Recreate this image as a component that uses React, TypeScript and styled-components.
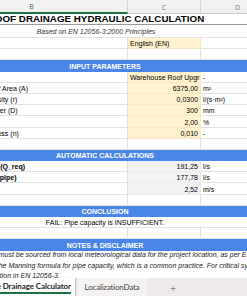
import React from 'react';
import styled, { createGlobalStyle } from 'styled-components';

const GlobalStyle = createGlobalStyle`
  html, body {
    margin: 0;
    padding: 0;
    background: #fff;
  }
  body {
    font-family: 'Liberation Sans', Arial, sans-serif;
    overflow: hidden;
  }
`;

// columns A..D, the sheet is scrolled so A and part of B are off screen
const COLS = '19px 192px 73px 74px';
const GRID = '#e1e1e1';
const ROW = 11.2;

type Tone = 'plain' | 'input' | 'calc' | 'band';

const tones: Record<Tone, { bg: string; line: string; color: string }> = {
  plain: { bg: '#ffffff', line: GRID, color: '#000' },
  input: { bg: '#fff2cc', line: '#f6e8c0', color: '#000' },
  calc: { bg: '#f2f2f2', line: '#e9e9e9', color: '#000' },
  band: { bg: '#4a86e8', line: '#4a86e8', color: '#fff' },
};

const Window = styled.div`
  width: 247px;
  height: 296px;
  display: flex;
  flex-direction: column;
  overflow: hidden;
  background: #fff;
`;

const Viewport = styled.div`
  flex: 1;
  min-height: 0;
  overflow: hidden;
`;

const Sheet = styled.div`
  width: 358px;
  margin-left: -83px;
`;

const Row = styled.div<{ $h?: number }>`
  display: grid;
  grid-template-columns: ${COLS};
  height: ${({ $h }) => $h ?? ROW}px;
`;

const ColHeader = styled.div<{ $selected?: boolean }>`
  display: flex;
  align-items: flex-end;
  justify-content: center;
  box-sizing: border-box;
  padding-bottom: 1px;
  background: #f1f1f1;
  border-right: 1px solid #d6d6d6;
  border-bottom: ${({ $selected }) => ($selected ? '2px solid #1e7145' : '1px solid #cdcdcd')};
  color: ${({ $selected }) => ($selected ? '#1e7145' : '#5d8470')};
  font-family: 'Open Sans', sans-serif;
  font-size: 7px;
  line-height: 9px;
`;

const Cell = styled.div<{
  $span?: number;
  $tone?: Tone;
  $align?: 'left' | 'right' | 'center';
  $bold?: boolean;
  $indent?: number;
}>`
  grid-column: span ${({ $span }) => $span ?? 1};
  display: flex;
  align-items: flex-end;
  justify-content: ${({ $align }) =>
    $align === 'right' ? 'flex-end' : $align === 'center' ? 'center' : 'flex-start'};
  box-sizing: border-box;
  min-width: 0;
  overflow: hidden;
  white-space: nowrap;
  padding: 0 2px 0 ${({ $indent }) => 2 + ($indent ?? 0)}px;
  font-size: 7px;
  line-height: 8px;
  font-weight: ${({ $bold }) => ($bold ? 700 : 400)};
  background: ${({ $tone }) => tones[$tone ?? 'plain'].bg};
  color: ${({ $tone }) => tones[$tone ?? 'plain'].color};
  border-right: 1px solid ${({ $tone }) => tones[$tone ?? 'plain'].line};
  border-bottom: 1px solid ${({ $tone }) => tones[$tone ?? 'plain'].line};
`;

const Title = styled.div`
  grid-column: span 4;
  display: flex;
  align-items: flex-end;
  justify-content: center;
  white-space: nowrap;
  border-bottom: 1px solid #9a9a9a;
  font-size: 9.8px;
  line-height: 10px;
  font-weight: 700;
  color: #000;
`;

const Subtitle = styled.div`
  grid-column: span 4;
  display: flex;
  align-items: flex-end;
  justify-content: center;
  padding-bottom: 1px;
  white-space: nowrap;
  border-bottom: 1px solid ${GRID};
  font-size: 7px;
  line-height: 8px;
  font-style: italic;
  color: #333;
`;

const Note = styled.div`
  grid-column: span 3;
  margin-top: -1px;
  padding: 0 2px;
  white-space: nowrap;
  font-size: 7px;
  line-height: 10px;
  font-style: italic;
  color: #222;
`;

const TabBar = styled.div`
  height: 18px;
  flex-shrink: 0;
  display: flex;
  align-items: stretch;
  background: #eeeaea;
  font-family: Lato, 'Open Sans', sans-serif;
  font-size: 8px;
  letter-spacing: -0.2px;
  color: #444;
`;

const ActiveTab = styled.div`
  width: 75px;
  flex-shrink: 0;
  box-sizing: border-box;
  display: flex;
  align-items: center;
  justify-content: flex-end;
  padding-right: 4px;
  overflow: hidden;
  background: #fff;
  box-shadow: 1px 0 1px rgba(0, 0, 0, 0.15);
  font-weight: 700;
  letter-spacing: -0.1px;
  color: #1f1f1f;
`;

const TabLabel = styled.span`
  white-space: nowrap;
  line-height: 10px;
  padding-bottom: 1px;
  border-bottom: 2px solid #1e7145;
`;

const Tab = styled.div`
  width: 70px;
  margin-left: 2px;
  display: flex;
  align-items: center;
  justify-content: center;
  white-space: nowrap;
  background: #f5f2f2;
`;

const AddSheet = styled.div`
  width: 52px;
  display: flex;
  align-items: center;
  justify-content: center;
  font-family: 'Open Sans', sans-serif;
  font-size: 11px;
  font-weight: 300;
  color: #555;
`;

type Line = { label: string; value: string; unit: string; left?: boolean };

const inputs: Line[] = [
  { label: 'Project Name', value: 'Warehouse Roof Upgrade', unit: '-', left: true },
  { label: 'Effective Roof Area (A)', value: '6375,00', unit: 'm²' },
  { label: 'Rainfall Intensity (r)', value: '0,0300', unit: 'l/(s·m²)' },
  { label: 'Outlet Diameter (D)', value: '300', unit: 'mm' },
  { label: 'Slope (S)', value: '2,00', unit: '%' },
  { label: 'Pipe Roughness (n)', value: '0,010', unit: '-' },
];

const results: Line[] = [
  { label: 'Design Flow (Q_req)', value: '191,25', unit: 'l/s' },
  { label: 'Capacity (Q_pipe)', value: '177,78', unit: 'l/s' },
  { label: 'Velocity (v)', value: '2,52', unit: 'm/s' },
];

const Band = ({ children }: { children: React.ReactNode }) => (
  <Row>
    <Cell $tone="band" />
    <Cell $tone="band" $span={3} $align="center" $bold>
      {children}
    </Cell>
  </Row>
);

const Blank = () => (
  <Row>
    <Cell />
    <Cell />
    <Cell />
    <Cell />
  </Row>
);

export default function App() {
  return (
    <>
      <GlobalStyle />
      <Window>
        <Viewport>
          <Sheet>
            <Row $h={14}>
              <ColHeader>A</ColHeader>
              <ColHeader $selected>B</ColHeader>
              <ColHeader>C</ColHeader>
              <ColHeader>D</ColHeader>
            </Row>
            <Row $h={11}>
              <Title>ROOF DRAINAGE HYDRAULIC CALCULATION</Title>
            </Row>
            <Row $h={13}>
              <Subtitle>Based on EN 12056-3:2000 Principles</Subtitle>
            </Row>
            <Row>
              <Cell />
              <Cell $indent={19}>Language</Cell>
              <Cell $tone="input">English (EN)</Cell>
              <Cell />
            </Row>
            <Blank />

            <Band>INPUT PARAMETERS</Band>
            {inputs.map((r) => (
              <Row key={r.label}>
                <Cell />
                <Cell $indent={19}>{r.label}</Cell>
                <Cell $tone="input" $align={r.left ? 'left' : 'right'}>
                  {r.value}
                </Cell>
                <Cell>{r.unit}</Cell>
              </Row>
            ))}
            <Blank />

            <Band>AUTOMATIC CALCULATIONS</Band>
            {results.map((r) => (
              <Row key={r.label}>
                <Cell />
                <Cell $indent={19} $bold>
                  {r.label}
                </Cell>
                <Cell $tone="calc" $align="right">
                  {r.value}
                </Cell>
                <Cell>{r.unit}</Cell>
              </Row>
            ))}
            <Blank />

            <Band>CONCLUSION</Band>
            <Row>
              <Cell />
              <Cell $span={3} $align="center">
                FAIL: Pipe capacity is INSUFFICIENT.
              </Cell>
            </Row>
            <Blank />

            <Band>NOTES &amp; DISCLAIMER</Band>
            <Row>
              <Cell />
              <Note>
                1. Rainfall intensity must be sourced from local meteorological data for the project location, as per
                EN 12056-3.
              </Note>
            </Row>
            <Row $h={30}>
              <Cell />
              <Note>
                2. This sheet uses the Manning formula for pipe capacity, which is a common practice. For critical systems,
                <br />
                consider the calculation in EN 12056-3.
              </Note>
            </Row>
          </Sheet>
        </Viewport>
        <TabBar>
          <ActiveTab>
            <TabLabel>Surface Drainage Calculator</TabLabel>
          </ActiveTab>
          <Tab>LocalizationData</Tab>
          <AddSheet>+</AddSheet>
        </TabBar>
      </Window>
    </>
  );
}
